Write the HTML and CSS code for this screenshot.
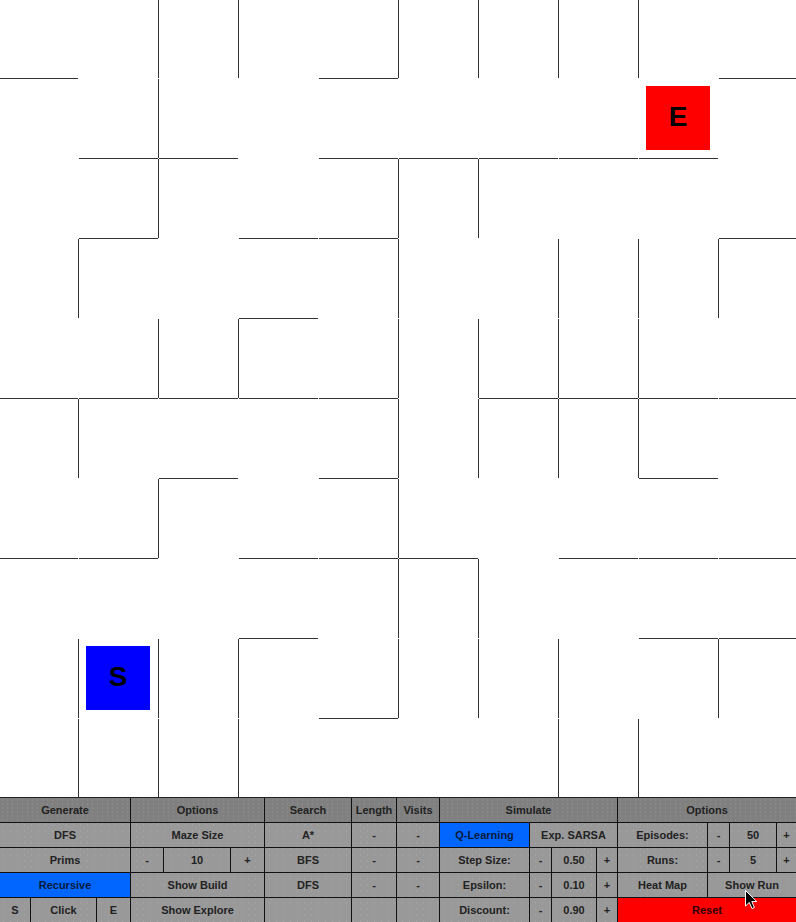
FILE: index.html
```html
<!DOCTYPE html>
<html>
<head>
<meta charset="utf-8">
<link rel="stylesheet" href="styles.css">
</head>
<body>
<div class="app">
  <div class="maze">
    <svg class="walls" width="796" height="797" viewBox="0 0 796 797">
      <path d="M78.5 239v79M78.5 399v79M78.5 639v79M78.5 719v79
               M158.5 -1v79M158.5 79v79M158.5 159v79M158.5 319v79M158.5 479v79M158.5 639v79M158.5 719v79
               M238.5 -1v79M238.5 319v79M238.5 639v79M238.5 719v79
               M398.5 -1v79M398.5 159v79M398.5 239v79M398.5 319v79M398.5 399v79M398.5 479v79M398.5 559v79M398.5 639v79
               M478.5 -1v79M478.5 159v79M478.5 319v79M478.5 399v79M478.5 559v79M478.5 639v79
               M558.5 -1v79M558.5 239v79M558.5 319v79M558.5 399v79M558.5 639v79M558.5 719v79
               M638.5 -1v79M638.5 239v79M638.5 319v79M638.5 399v79M638.5 719v79
               M718.5 239v79M718.5 639v79
               M-1 78.5h79M319 78.5h79M719 78.5h79
               M79 158.5h79M159 158.5h79M319 158.5h79M399 158.5h79M479 158.5h79M559 158.5h79M639 158.5h79
               M79 238.5h79M239 238.5h79M319 238.5h79M719 238.5h79
               M239 318.5h79
               M-1 398.5h79M79 398.5h79M159 398.5h79M239 398.5h79M319 398.5h79M479 398.5h79M559 398.5h79M639 398.5h79M719 398.5h79
               M159 478.5h79M319 478.5h79M639 478.5h79
               M-1 558.5h79M79 558.5h79M239 558.5h79M319 558.5h79M399 558.5h79M559 558.5h79M639 558.5h79M719 558.5h79
               M239 638.5h79M639 638.5h79M719 638.5h79
               M319 718.5h79" fill="none" stroke="#333" stroke-width="1"/>
    </svg>
    <div class="marker end">E</div>
    <div class="marker start">S</div>
  </div>
  <div class="panel">
    <div class="cell head span3">Generate</div>
    <div class="cell head span3">Options</div>
    <div class="cell head">Search</div>
    <div class="cell head">Length</div>
    <div class="cell head">Visits</div>
    <div class="cell head span4">Simulate</div>
    <div class="cell head span4 last">Options</div>

    <div class="cell span3">DFS</div>
    <div class="cell span3">Maze Size</div>
    <div class="cell">A*</div>
    <div class="cell">-</div>
    <div class="cell">-</div>
    <div class="cell blue">Q-Learning</div>
    <div class="cell span3">Exp. SARSA</div>
    <div class="cell">Episodes:</div>
    <div class="cell">-</div>
    <div class="cell">50</div>
    <div class="cell last">+</div>

    <div class="cell span3">Prims</div>
    <div class="cell">-</div>
    <div class="cell">10</div>
    <div class="cell">+</div>
    <div class="cell">BFS</div>
    <div class="cell">-</div>
    <div class="cell">-</div>
    <div class="cell">Step Size:</div>
    <div class="cell">-</div>
    <div class="cell">0.50</div>
    <div class="cell">+</div>
    <div class="cell">Runs:</div>
    <div class="cell">-</div>
    <div class="cell">5</div>
    <div class="cell last">+</div>

    <div class="cell span3 blue">Recursive</div>
    <div class="cell span3">Show Build</div>
    <div class="cell">DFS</div>
    <div class="cell">-</div>
    <div class="cell">-</div>
    <div class="cell">Epsilon:</div>
    <div class="cell">-</div>
    <div class="cell">0.10</div>
    <div class="cell">+</div>
    <div class="cell">Heat Map</div>
    <div class="cell span3 last">Show Run</div>

    <div class="cell bottom">S</div>
    <div class="cell bottom">Click</div>
    <div class="cell bottom">E</div>
    <div class="cell bottom span3">Show Explore</div>
    <div class="cell bottom"></div>
    <div class="cell bottom"></div>
    <div class="cell bottom"></div>
    <div class="cell bottom">Discount:</div>
    <div class="cell bottom">-</div>
    <div class="cell bottom">0.90</div>
    <div class="cell bottom">+</div>
    <div class="cell bottom span4 red last">Reset</div>
  </div>
  <svg class="cursor" width="13" height="20" viewBox="0 0 13 20">
    <path d="M0.5 0.5 L0.5 16 L4.3 12.4 L7 18.6 L9.4 17.5 L6.8 11.6 L11.8 11.6 Z" fill="#000" stroke="#fff" stroke-width="1" stroke-linejoin="round"/>
  </svg>
</div>
</body>
</html>
```

FILE: styles.css
```css
html, body {
  margin: 0;
  padding: 0;
  background: #fff;
  overflow: hidden;
}
.app {
  position: relative;
  width: 796px;
  height: 922px;
  font-family: "Liberation Sans", Arial, sans-serif;
}
.maze {
  position: relative;
  width: 796px;
  height: 797px;
  background: #fff;
  overflow: hidden;
}
.walls {
  display: block;
}
.marker {
  position: absolute;
  width: 64px;
  height: 64px;
  display: flex;
  align-items: center;
  justify-content: center;
  font-weight: bold;
  font-size: 28px;
  color: #000;
  line-height: 1;
  padding-bottom: 3px;
  box-sizing: border-box;
}
.marker.end {
  left: 646px;
  top: 86px;
  background: #ff0000;
}
.marker.start {
  left: 86px;
  top: 646px;
  background: #0000ff;
}
.panel {
  display: grid;
  grid-template-columns: 31px 66px 34px 33px 67px 34px 87px 45px 43px 90px 22px 45px 21px 90px 22px 47px 19px;
  grid-template-rows: 25px 25px 25px 25px 24px;
  border-top: 1px solid #222;
  background-color: #999;
  background-image: radial-gradient(circle, rgba(255,255,255,0.09) 0.6px, transparent 0.9px);
  background-size: 7px 6px;
}
.cell {
  display: flex;
  align-items: center;
  justify-content: center;
  border-right: 1px solid #111;
  border-bottom: 1px solid #111;
  box-sizing: border-box;
  font-size: 11px;
  font-weight: bold;
  color: #222;
  white-space: nowrap;
  overflow: hidden;
}
.cell.head {
  background-color: #808080;
  background-image: radial-gradient(circle, rgba(255,255,255,0.08) 0.6px, transparent 0.9px);
  background-size: 5px 4px;
}
.cell.span3 { grid-column: span 3; }
.cell.span4 { grid-column: span 4; }
.cell.last { border-right: none; }
.cell.bottom { border-bottom: none; }
.cell.blue {
  background: #0066ff;
  color: #0a1a3a;
}
.cell.red {
  background: #ff0000;
  color: #2a0000;
}
.cursor {
  position: absolute;
  left: 745px;
  top: 890px;
}
```
